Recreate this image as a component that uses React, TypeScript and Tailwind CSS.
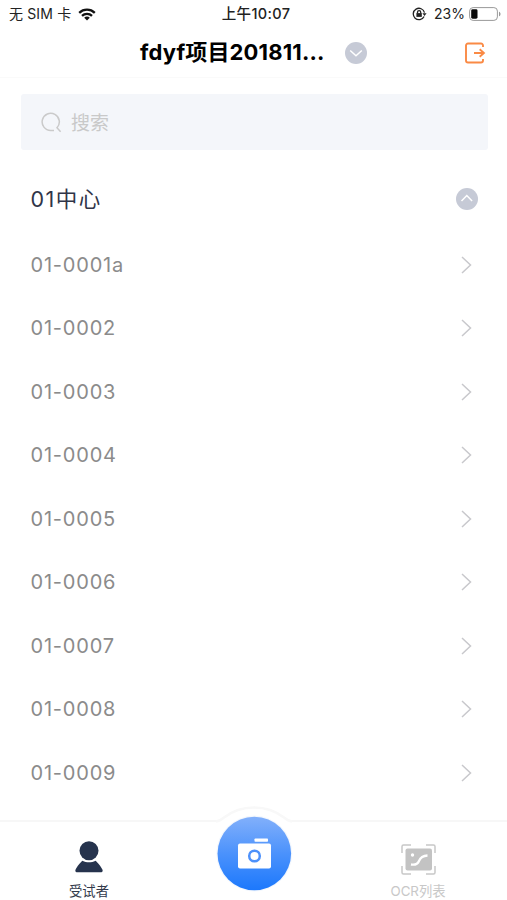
import type { ReactNode } from 'react'

const subjects = [
  '01-0001a',
  '01-0002',
  '01-0003',
  '01-0004',
  '01-0005',
  '01-0006',
  '01-0007',
  '01-0008',
  '01-0009',
]

function StatusBar() {
  return (
    <div className="grid h-7 grid-cols-3 items-center pl-[9px] pr-[6px] text-[14px] leading-none text-[#222]">
      <div className="flex items-center">
        <span className="whitespace-nowrap tracking-[0.15px]">无 SIM 卡</span>
        <svg className="ml-[7px]" width="18" height="13" viewBox="0 0 18 13" fill="none" stroke="#111" strokeWidth="2.3">
          <path d="M1.2 4.8C5.6.6 12.4.6 16.8 4.8" />
          <path d="M4 7.9c2.8-2.7 7.2-2.7 10 0" />
          <path d="M9 12.4 6.2 9.7c1.5-1.5 4.1-1.5 5.6 0Z" fill="#111" stroke="none" />
        </svg>
      </div>
      <div className="whitespace-nowrap pl-[2px] text-center text-[14.5px] font-medium tracking-[0.35px]">上午10:07</div>
      <div className="flex items-center justify-end">
        <svg className="mr-[7px]" width="15" height="14" viewBox="0 0 15 14" fill="none" stroke="#222" strokeWidth="1.3">
          <path d="M12.1 9.5A5.7 5.7 0 1 1 12.5 5.6" />
          <path d="m10.4 6.2 4.2 0-2.1 2.7Z" fill="#222" stroke="none" />
          <path d="M5.5 6.4V5.2a1.6 1.6 0 0 1 3.2 0v1.2" />
          <path d="M4.4 6.1h5.4v3.8H4.4Z" fill="#222" stroke="none" />
        </svg>
        <span>23%</span>
        <svg className="ml-[4px]" width="32" height="14" viewBox="0 0 32 14">
          <rect x=".6" y=".6" width="27.8" height="12.8" rx="3.5" fill="none" stroke="#999" />
          <rect x="2.2" y="2.3" width="6.3" height="9.4" rx="1.4" fill="#080808" />
          <path d="M30 4.7c2 .7 2 3.9 0 4.6Z" fill="#999" />
        </svg>
      </div>
    </div>
  )
}

function RoundArrow({ up = false }: { up?: boolean }) {
  return (
    <svg className="shrink-0" width="22" height="22" viewBox="0 0 22 22" fill="none">
      <circle cx="11" cy="11" r="11" fill="#c6cad6" />
      <path d={up ? 'm5.5 13.1 5.3-5.6 5.3 5.6' : 'm5.2 8.5 5.8 5.3 5.8-5.3'} stroke="#fff" strokeWidth="1.5" />
    </svg>
  )
}

function Header() {
  return (
    <header className="flex h-[50px] items-center border-b border-[#fafafa] pl-[140px] pr-[21px]">
      <h1 className="w-[190px] whitespace-nowrap pb-[2px] text-[22px] font-bold leading-none tracking-[0.15px] text-black">
        fdyf项目201811...
      </h1>
      <div className="ml-[15px]">
        <RoundArrow />
      </div>
      <svg className="ml-auto" width="21" height="22" viewBox="0 0 21 22" fill="none" stroke="#fa8a45" strokeWidth="1.9">
        <path d="M18 5V3.5a2 2 0 0 0-2-2H3a2 2 0 0 0-2 2v15a2 2 0 0 0 2 2h13a2 2 0 0 0 2-2V17" />
        <path d="M9 11h10M14.7 7.2l4.200 3.800-4.200 3.800" />
      </svg>
    </header>
  )
}

function SearchBox() {
  return (
    <div className="ml-[21px] mr-[19px] mt-4 flex h-14 items-center rounded-[3px] bg-[#f4f6fa] pl-5">
      <svg width="21" height="21" viewBox="0 0 21 21" fill="none" stroke="#cacaca" strokeWidth="1.5">
        <path d="M13 18.5H9.7a8.6 8.6 0 1 1 6.300-2.700l3.600 4" />
      </svg>
      <span className="ml-[9px] pt-[2px] text-[19px] leading-none text-[#c9c9c9]">搜索</span>
    </div>
  )
}

function TabItem({ label, className, children }: { label: string; className: string; children: ReactNode }) {
  return (
    <div className={`flex flex-col items-center ${className}`}>
      <div className="flex h-[35px] items-center">{children}</div>
      <span className="mt-[9px] whitespace-nowrap text-[13.3px] leading-[16px]">{label}</span>
    </div>
  )
}

function TabBar() {
  return (
    <nav className="relative mt-auto flex h-20 justify-between border-t-2 border-[#f7f7f7] pl-[49px] pr-[49px] pt-[17px]">
      <TabItem label="受试者" className="w-20 text-[#333a4b]">
        <svg width="28" height="32" viewBox="0 0 28 32" fill="#26334d">
          <circle cx="14" cy="9.8" r="9.5" />
          <path d="M7.5 19.8c4 2 9 2 13 0 1.500 1 5.800 6.200 6.900 8.700.7 1.700 0 2.700-1.600 2.700H2.200c-1.600 0-2.300-1-1.600-2.700 1.100-2.500 5.400-7.700 6.900-8.700Z" />
        </svg>
      </TabItem>

      {/* 拍照按钮，凸出底部导航 */}
      <svg className="absolute left-[206px] top-[-19px]" width="97" height="97" viewBox="0 0 97 97">
        <defs>
          <linearGradient id="camera" x1="0" y1="0" x2="0" y2="1">
            <stop offset="0" stopColor="#82b0fb" />
            <stop offset=".5" stopColor="#4b92fc" />
            <stop offset="1" stopColor="#1c78fc" />
          </linearGradient>
        </defs>
        <path d="M12 18C31 0 65 0 84 18v20H12Z" fill="#fff" />
        <path d="M10 18.500c3-.3 5-1.500 8-4C35 1 61 1 78 14.500c3 2.500 5 3.700 8 4" fill="none" stroke="#f8f8f8" strokeWidth="2.500" />
        <circle cx="48.3" cy="50.5" r="38" fill="#f3f7fd" />
        <circle cx="48.3" cy="50.5" r="36.8" fill="url(#camera)" />
        <rect x="48.5" y="35.5" width="13.5" height="3.2" rx=".8" fill="#fff" />
        <rect x="32" y="40.5" width="33" height="25" rx="2" fill="#fff" />
        <circle cx="48.5" cy="53" r="5.3" fill="none" stroke="#4d91fb" strokeWidth="2.5" />
      </svg>

      <TabItem label="OCR列表" className="w-20 text-[#c8c8c8]">
        <svg className="mt-[6px]" width="35" height="31" viewBox="0 0 35 31" fill="none">
          <path d="M10 1H2.500Q1 1 1 2.500V9M25 1h7.500Q34 1 34 2.500V9M1 22v6.500Q1 30 2.500 30H10M34 22v6.500Q34 30 32.500 30H25" stroke="#c8c8c8" strokeWidth="1.5" />
          <rect x="4.5" y="4.5" width="26.5" height="22" rx="2" fill="#c3c3c3" />
          <circle cx="11.5" cy="11" r="1.7" fill="#fff" />
          <path d="M10 20.500c4 .7 6.700-.3 8-3.500 1.500-3.800 4.500-5.300 8.500-5.500" stroke="#fff" strokeWidth="2.3" />
        </svg>
      </TabItem>
    </nav>
  )
}

export default function App() {
  return (
    <div className="flex h-[900px] w-[507px] flex-col overflow-hidden bg-white font-['Inter','Noto_Sans_CJK_SC',sans-serif]">
      <StatusBar />
      <Header />
      <SearchBox />

      {/* 受试者列表 */}
      <main className="pl-[30.5px] pr-[29.5px] pt-[15px]">
        <div className="flex h-[68px] items-center justify-between">
          <h2 className="pt-px text-[21.5px] leading-none tracking-[1.5px] text-[#303548]">01中心</h2>
          <RoundArrow up />
        </div>
        <ul>
          {subjects.map((subject) => (
            <li key={subject} className="flex h-[63.5px] items-center justify-between pr-[5.5px]">
              <span className="text-[20px] leading-none tracking-[0.8px] text-[#8b8b8b]">{subject}</span>
              <svg width="11" height="18" viewBox="0 0 11 18" fill="none" stroke="#c8c8cc" strokeWidth="1.5">
                <path d="m1 1 8.500 8L1 17" />
              </svg>
            </li>
          ))}
        </ul>
      </main>

      <TabBar />
    </div>
  )
}
